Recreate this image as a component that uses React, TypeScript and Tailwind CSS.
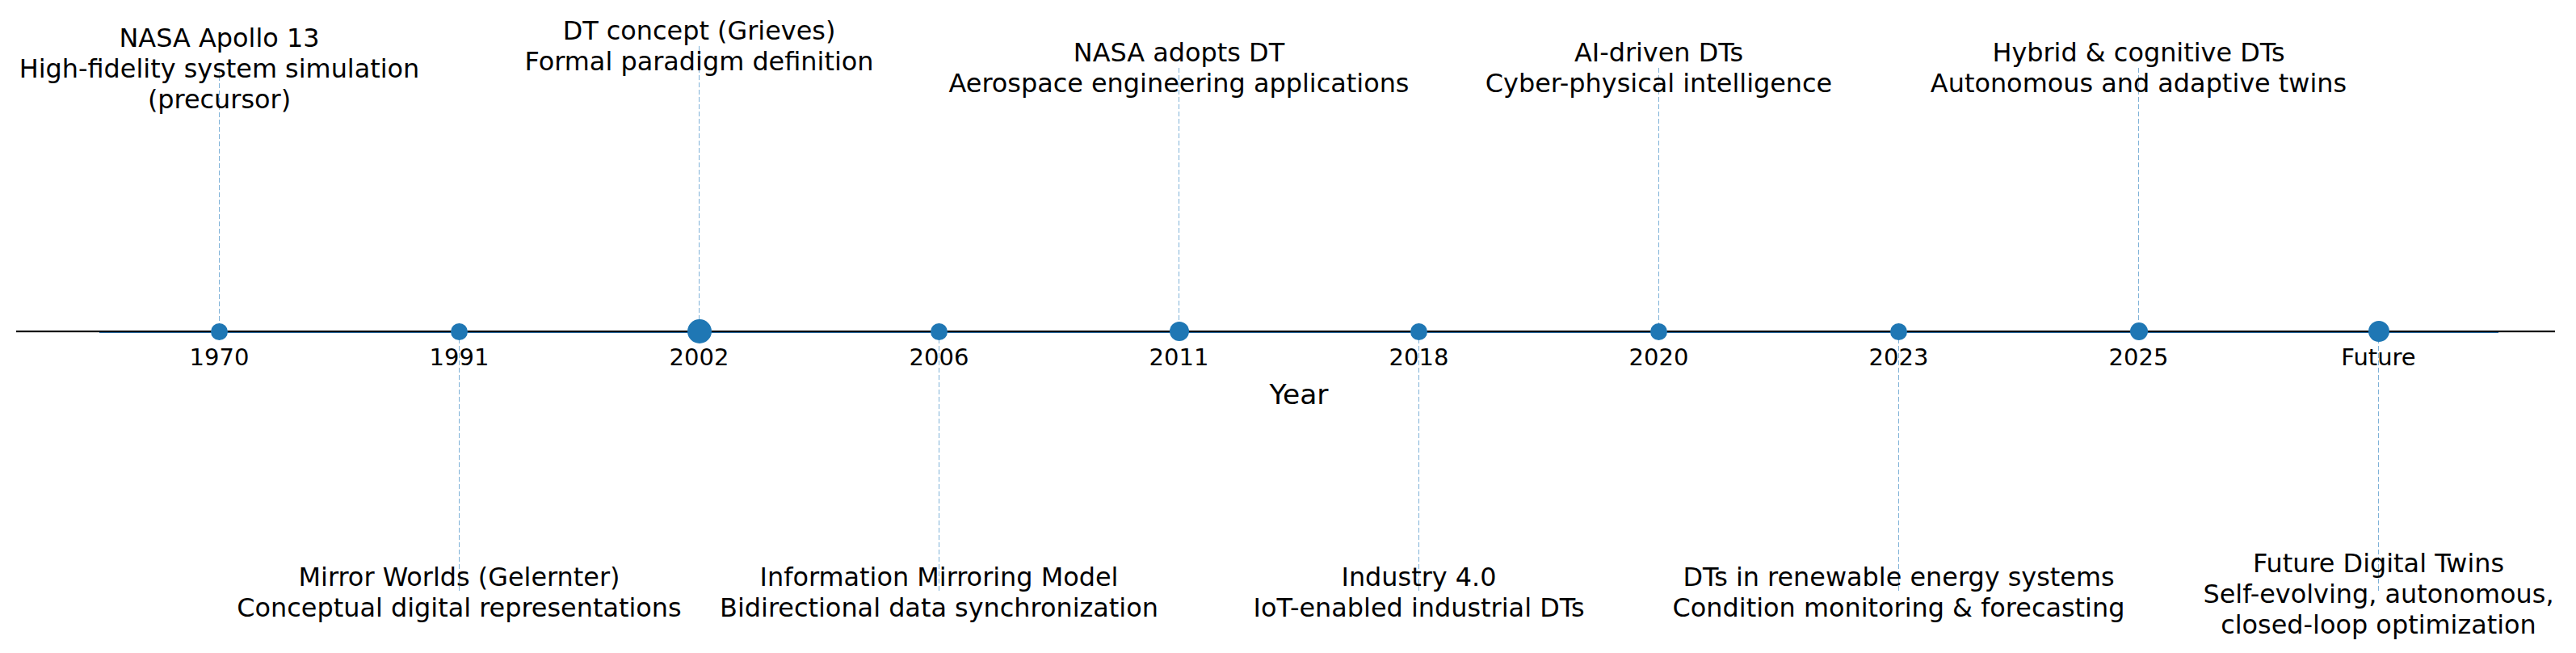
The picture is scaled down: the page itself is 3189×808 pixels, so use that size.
const events = [
  {
    year: '1970',
    lines: ['NASA Apollo 13', 'High-fidelity system simulation', '(precursor)'],
    top: true,
    dot: 'w-[21px] h-[21px]',
    dash: 'bg-position-[148px_85px] bg-size-[1px_325px]',
    text: 'mt-[28px]',
  },
  {
    year: '1991',
    lines: ['Mirror Worlds (Gelernter)', 'Conceptual digital representations'],
    top: false,
    dot: 'w-[21px] h-[21px]',
    dash: 'bg-position-[148px_410px] bg-size-[1px_324px]',
    text: 'mt-[238px]',
  },
  {
    year: '2002',
    lines: ['DT concept (Grieves)', 'Formal paradigm definition'],
    top: true,
    dot: 'w-[30px] h-[30px]',
    dash: 'bg-position-[148px_57px] bg-size-[1px_353px]',
    text: 'mt-[19px]',
  },
  {
    year: '2006',
    lines: ['Information Mirroring Model', 'Bidirectional data synchronization'],
    top: false,
    dot: 'w-[21px] h-[21px]',
    dash: 'bg-position-[148px_410px] bg-size-[1px_324px]',
    text: 'mt-[238px]',
  },
  {
    year: '2011',
    lines: ['NASA adopts DT', 'Aerospace engineering applications'],
    top: true,
    dot: 'w-[24px] h-[24px]',
    dash: 'bg-position-[148px_84px] bg-size-[1px_326px]',
    text: 'mt-[46px]',
    axisTitle: true,
  },
  {
    year: '2018',
    lines: ['Industry 4.0', 'IoT-enabled industrial DTs'],
    top: false,
    dot: 'w-[21px] h-[21px]',
    dash: 'bg-position-[148px_410px] bg-size-[1px_324px]',
    text: 'mt-[238px]',
  },
  {
    year: '2020',
    lines: ['AI-driven DTs', 'Cyber-physical intelligence'],
    top: true,
    dot: 'w-[21px] h-[21px]',
    dash: 'bg-position-[148px_84px] bg-size-[1px_326px]',
    text: 'mt-[46px]',
  },
  {
    year: '2023',
    lines: ['DTs in renewable energy systems', 'Condition monitoring & forecasting'],
    top: false,
    dot: 'w-[21px] h-[21px]',
    dash: 'bg-position-[148px_410px] bg-size-[1px_324px]',
    text: 'mt-[238px]',
  },
  {
    year: '2025',
    lines: ['Hybrid & cognitive DTs', 'Autonomous and adaptive twins'],
    top: true,
    dot: 'w-[22px] h-[22px]',
    dash: 'bg-position-[148px_84px] bg-size-[1px_326px]',
    text: 'mt-[46px]',
  },
  {
    year: 'Future',
    lines: ['Future Digital Twins', 'Self-evolving, autonomous,', 'closed-loop optimization'],
    top: false,
    dot: 'w-[26px] h-[26px]',
    dash: 'bg-position-[148px_410px] bg-size-[1px_324px]',
    text: 'mt-[221px]',
  },
];

type Event = (typeof events)[number];

function Label({ lines, className }: { lines: string[]; className: string }) {
  return (
    <div className={`${className} shrink-0 whitespace-nowrap text-center text-[31.9px] leading-[38px]`}>
      {lines.map((l) => (
        <div key={l}>{l}</div>
      ))}
    </div>
  );
}

function Column({ ev }: { ev: Event }) {
  return (
    <div
      className={`flex flex-col items-center w-[297px] h-[808px] shrink-0 bg-[repeating-linear-gradient(to_bottom,#7fb2d8_0px,#7fb2d8_6px,transparent_6px,transparent_9px)] bg-no-repeat ${ev.dash}`}
    >
      <div className="h-[400px] flex flex-col items-center">
        {ev.top && <Label lines={ev.lines} className={ev.text} />}
      </div>
      <div className="h-[20px] self-stretch flex items-center justify-center bg-[linear-gradient(to_bottom,transparent_9px,#000_9px,#000_11px,#23649a_11px,#23649a_12px,transparent_12px)]">
        <div className={`${ev.dot} shrink-0 rounded-full bg-[#1f77b4] relative z-10`} />
      </div>
      <div className="flex flex-col items-center">
        <div className="mt-[8px] text-[29px] leading-[29px]">{ev.year}</div>
        {ev.axisTitle && (
          <div className="mt-[14px] ml-[297px] text-[34.5px] leading-[34px] whitespace-nowrap">Year</div>
        )}
        {!ev.top && <Label lines={ev.lines} className={ev.text} />}
      </div>
    </div>
  );
}

export default function App() {
  return (
    <div className="w-[3189px] h-[808px] overflow-hidden bg-white text-black flex pl-[20px] font-['DejaVu_Sans',sans-serif]">
      <div className="mt-[400px] h-[20px] w-[103px] shrink-0 bg-[linear-gradient(to_bottom,transparent_9px,#000_9px,#000_11px,#d4d4d4_11px,#d4d4d4_12px,transparent_12px)]" />
      {events.map((ev) => (
        <Column key={ev.year} ev={ev} />
      ))}
      <div className="mt-[400px] h-[20px] w-[70px] shrink-0 bg-[linear-gradient(to_bottom,transparent_9px,#000_9px,#000_11px,#d4d4d4_11px,#d4d4d4_12px,transparent_12px)]" />
    </div>
  );
}
